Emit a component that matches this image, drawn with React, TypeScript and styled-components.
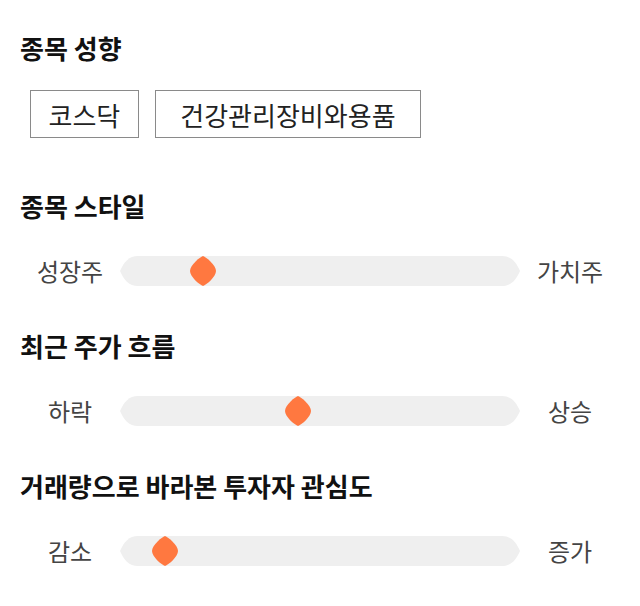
import styled, { createGlobalStyle } from "styled-components";

const GlobalStyle = createGlobalStyle`
  body {
    margin: 0;
    background: #ffffff;
    font-family: "Noto Sans CJK KR", "Noto Sans", sans-serif;
  }
`;

const TRACK_W = 400;
const TRACK_H = 30;
const THUMB_W = 26;

interface ISlider {
  left: string;
  right: string;
  value: number;
}

const sliders: (ISlider & { title: string })[] = [
  { title: "종목 스타일", left: "성장주", right: "가치주", value: 0.186 },
  { title: "최근 주가 흐름", left: "하락", right: "상승", value: 0.441 },
  { title: "거래량으로 바라본 투자자 관심도", left: "감소", right: "증가", value: 0.086 },
];

const tags = [
  { label: "코스닥", pad: 17.5 },
  { label: "건강관리장비와용품", pad: 24.5 },
];

function Slider({ left, right, value }: ISlider) {
  return (
    <SliderRow>
      <SideLabel>{left}</SideLabel>
      <Track>
        <TrackShape />
        <Thumb
          width={THUMB_W}
          height={TRACK_H}
          viewBox="0 0 26 30"
          style={{ left: Math.round(value * (TRACK_W - THUMB_W)) }}
        >
          <path d="M13 0 C16 1 26 9 26 15 C26 21 16 29 13 30 C10 29 0 21 0 15 C0 9 10 1 13 0 Z" />
        </Thumb>
      </Track>
      <SideLabel>{right}</SideLabel>
    </SliderRow>
  );
}

export default function App() {
  return (
    <Page>
      <GlobalStyle />
      <Section>
        <Heading gap={25}>종목 성향</Heading>
        <TagList>
          {tags.map((tag) => (
            <Tag key={tag.label} pad={tag.pad}>
              {tag.label}
            </Tag>
          ))}
        </TagList>
      </Section>

      <SliderList>
        {sliders.map((item) => (
          <Section key={item.title}>
            <Heading gap={33}>{item.title}</Heading>
            <Slider left={item.left} right={item.right} value={item.value} />
          </Section>
        ))}
      </SliderList>
    </Page>
  );
}

const Page = styled.div`
  width: 640px;
  padding: 31px 20px 0;
  box-sizing: border-box;
  display: flex;
  flex-direction: column;
  gap: 51px;
`;

const Section = styled.section`
  display: flex;
  flex-direction: column;
`;

const Heading = styled.h2<{ gap: number }>`
  margin: 0 0 ${(props) => props.gap}px;
  font-size: 26px;
  line-height: 34px;
  font-weight: 700;
  color: #111111;
`;

const TagList = styled.div`
  display: flex;
  gap: 16px;
  padding-left: 10px;
`;

const Tag = styled.div<{ pad: number }>`
  height: 48px;
  padding: 0 ${(props) => props.pad}px;
  border: 1px solid #8a8a8a;
  box-sizing: border-box;
  display: flex;
  align-items: center;
  font-size: 26px;
  color: #222222;
`;

const SliderList = styled.div`
  display: flex;
  flex-direction: column;
  gap: 43px;
`;

const SliderRow = styled.div`
  display: grid;
  grid-template-columns: 100px ${TRACK_W}px 100px;
  align-items: center;
  height: ${TRACK_H}px;
`;

const SideLabel = styled.span`
  text-align: center;
  font-size: 24px;
  line-height: 30px;
  color: #444444;
`;

const Track = styled.div`
  position: relative;
  width: ${TRACK_W}px;
  height: ${TRACK_H}px;
`;

const TrackShape = styled.div`
  width: 100%;
  height: 100%;
  background: #efefef;
  clip-path: path("M0 15 C4 6 9 0 18 0 H382 C391 0 396 6 400 15 C396 24 391 30 382 30 H18 C9 30 4 24 0 15 Z");
`;

const Thumb = styled.svg`
  position: absolute;
  top: 0;
  fill: #ff7840;
`;
